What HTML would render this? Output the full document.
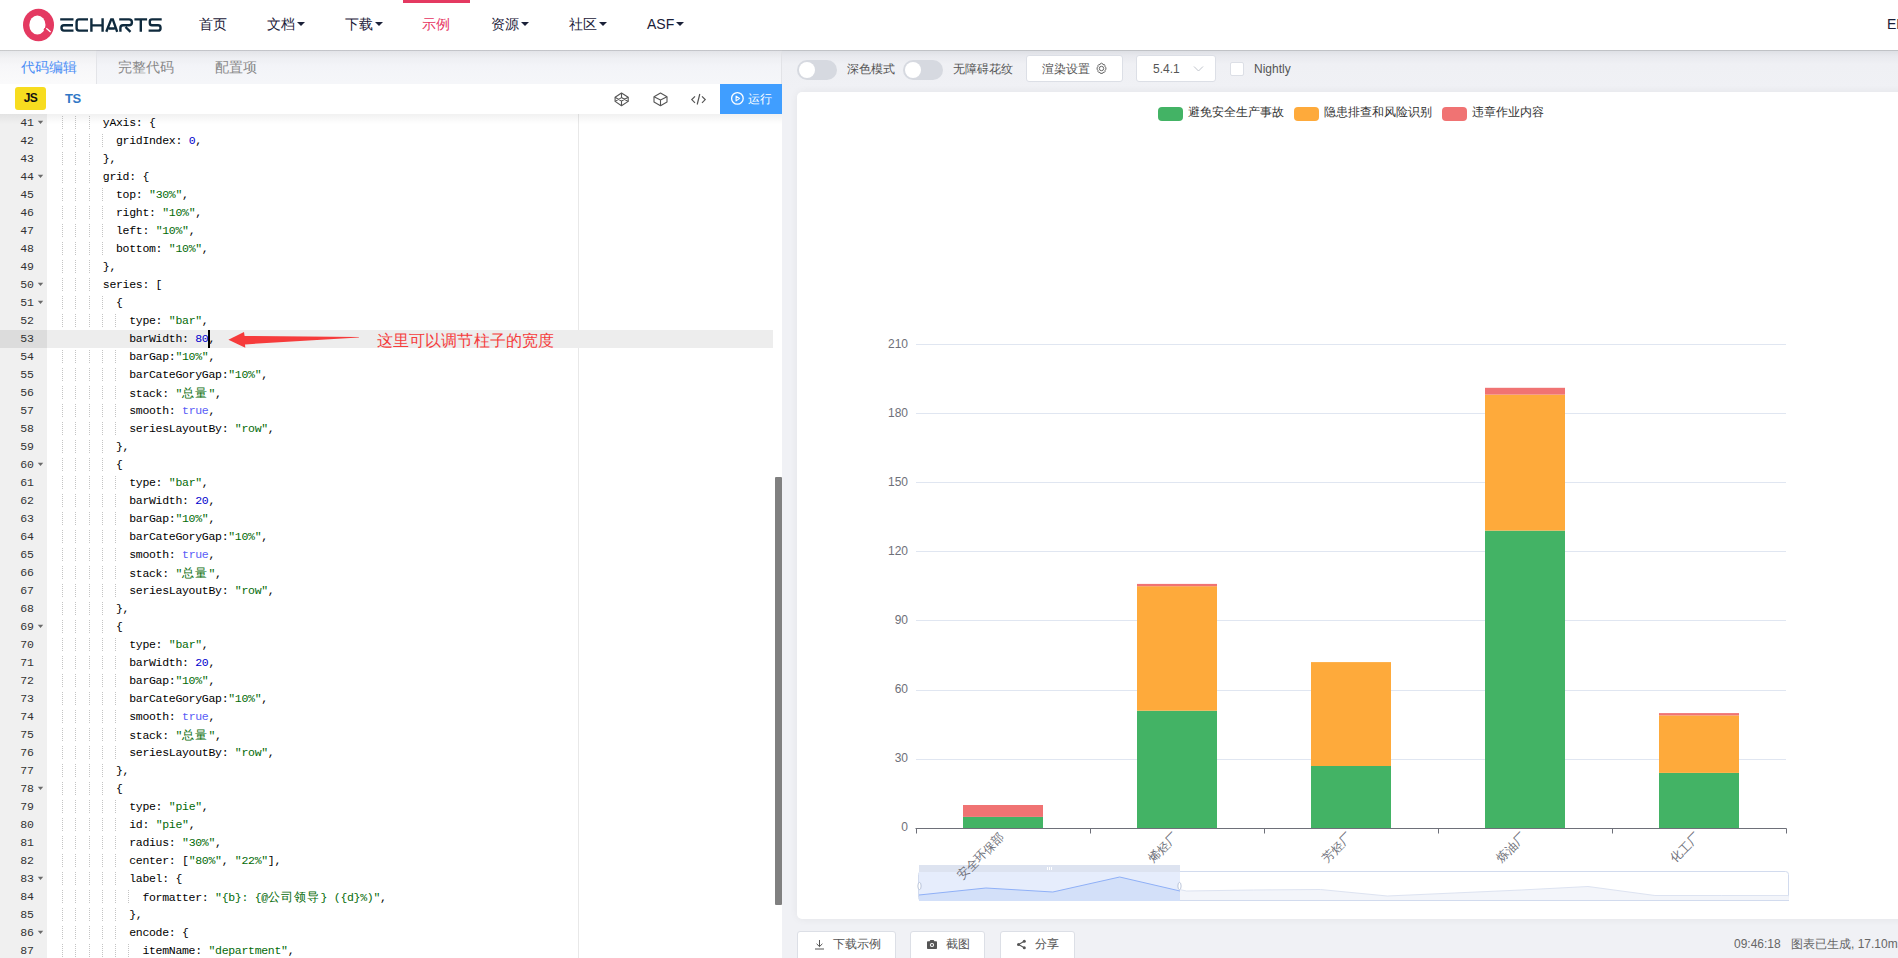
<!DOCTYPE html>
<html><head><meta charset="utf-8">
<style>
*{box-sizing:border-box;margin:0;padding:0}
html,body{width:1898px;height:958px;overflow:hidden;background:#fff;font-family:"Liberation Sans",sans-serif}
.abs{position:absolute}
#hdr{position:absolute;left:0;top:0;width:1898px;height:50px;background:#fff;z-index:5;box-shadow:0 1px 0 rgba(0,0,0,.13)}
.nav{position:absolute;top:15px;font-size:14px;line-height:18px;color:#1a2038;white-space:nowrap}
.caret{display:inline-block;width:0;height:0;border-top:4px solid #1a2038;border-left:4px solid transparent;border-right:4px solid transparent;vertical-align:middle;margin-left:2px;margin-top:-2px}
/* left */
#left{position:absolute;left:0;top:50px;width:782px;height:908px;background:#fff;overflow:hidden}
#tabs{position:absolute;left:0;top:0;width:782px;height:34px;background:linear-gradient(#e1e2e7 0px,#eeeff3 8px,#f3f4f8 16px,#f5f6f9 33px);border-right:1px solid #e2e3e7}
.tab{position:absolute;top:8px;font-size:14px;line-height:18px;color:#888}
#jsbar{position:absolute;left:0;top:34px;width:782px;height:30px;background:#fff}
#editor{position:absolute;left:0;top:64px;width:782px;height:844px;background:#fff;overflow:hidden}
#gutter{position:absolute;left:0;top:0;width:47px;height:844px;background:#f0f0f0}
.ln{position:absolute;left:0;width:34px;text-align:right;font-family:"Liberation Mono",monospace;font-size:11.5px;color:#333;height:18px;line-height:18px}
.fold{position:absolute;left:38px;width:0;height:0;border-top:3px solid #666;border-left:2.5px solid transparent;border-right:2.5px solid transparent}
.cl{position:absolute;left:50px;height:18px;line-height:18px;font-family:"Liberation Mono",monospace;font-size:11.5px;letter-spacing:-0.3px;white-space:pre;color:#000}
.s{color:#036a07}.n{color:#0000cd}.b{color:#585cf6}
.cj{display:inline-block;width:13.2px;letter-spacing:0;font-family:"Liberation Sans",sans-serif;font-size:12px}
.ig{position:absolute;width:1px;height:13px;margin-top:2px;background:repeating-linear-gradient(to bottom,#c4c4c4 0,#c4c4c4 1px,transparent 1px,transparent 2px)}
/* right */
#right{position:absolute;left:782px;top:50px;width:1116px;height:908px;background:linear-gradient(#dcdee3 0px,#e8e9ee 6px,#eff0f4 14px,#f0f1f5 40px)}
.ctl{position:absolute;font-size:12px;color:#555;line-height:16px;white-space:nowrap}
.tog{position:absolute;width:40px;height:20px;border-radius:10px;background:#d6d9e0}
.tog i{position:absolute;left:2px;top:2px;width:16px;height:16px;border-radius:8px;background:#fff}
.btn{position:absolute;background:#fff;border:1px solid #dcdfe6;border-radius:3px}
#card{position:absolute;left:15px;top:42px;width:1120px;height:827px;background:#fff;border-radius:5px;box-shadow:0 0 8px rgba(0,0,0,.06)}
.xl{position:absolute;z-index:3;height:16px;line-height:16px;font-size:12px;color:#6e7079;white-space:nowrap;transform-origin:100% 50%;transform:rotate(-45deg)}
.lg{z-index:3;font-size:12px;line-height:16px;color:#333;white-space:nowrap}
</style></head><body>

<div id="hdr">
  <svg class="abs" style="left:0;top:0" width="200" height="50" viewBox="0 0 200 50">
    <ellipse cx="38.5" cy="25" rx="15.5" ry="16.2" fill="#e43961"/>
    <ellipse cx="37.4" cy="25" rx="8.1" ry="9.4" fill="#fff"/><circle cx="45.3" cy="29.3" r="1.5" fill="#e43961"/><path d="M46.3,28.2L50.6,32" stroke="#fff" stroke-width="1.3"/>
    <g fill="none" stroke="#0f2a3d" stroke-width="2.4">
      <path d="M60.2,19.4H73.5M73,25.3H64Q61.5,25.3 61.5,27.8V28.1Q61.5,30.6 64,30.6H73.5"/>
      <path d="M88,19.4H79Q76.6,19.4 76.6,22V28Q76.6,30.6 79,30.6H88"/>
      <path d="M91.4,18.2V31.8M102.6,18.2V31.8M91.4,25.4H102.6"/>
      <path d="M106.3,31.8L111.2,19.4H112.8L117.2,31.8M108.8,28.5H114.8"/>
      <path d="M119.2,19.4H129Q131.9,19.4 131.9,22.3V22.4Q131.9,25.3 129,25.3H123Q120.4,25.3 120.4,28V31.8M125.5,27L130.5,31.8"/>
      <path d="M134.4,19.4H147.1M140.8,19.4V31.8"/>
      <path d="M161.7,19.4H152Q149.8,19.4 149.8,21.5V23Q149.8,25.3 152,25.3H158Q160.5,25.3 160.5,27.5V28.4Q160.5,30.6 158,30.6H148.6"/>
    </g>
  </svg>
  <div class="nav" style="left:199px">首页</div>
  <div class="nav" style="left:267px">文档<span class="caret"></span></div>
  <div class="nav" style="left:345px">下载<span class="caret"></span></div>
  <div class="abs" style="left:403px;top:0;width:67px;height:3px;background:#e43961"></div>
  <div class="nav" style="left:422px;color:#e6335f">示例</div>
  <div class="nav" style="left:491px">资源<span class="caret"></span></div>
  <div class="nav" style="left:569px">社区<span class="caret"></span></div>
  <div class="nav" style="left:647px">ASF<span class="caret"></span></div>
  <div class="nav" style="left:1887px">EN</div>
</div>

<div id="left">
  <div id="tabs">
    <div class="abs" style="left:0;top:0;width:97px;height:34px;background:linear-gradient(#e6e7ea 0px,#f2f2f4 8px,#f7f7f9 16px,#fafafb 33px);border-right:1px solid #e3e4e8"></div>
    <div class="tab" style="left:21px;color:#4c8ef5">代码编辑</div>
    <div class="tab" style="left:118px">完整代码</div>
    <div class="tab" style="left:215px">配置项</div>
  </div>
  <div id="jsbar">
    <div class="abs" style="left:15px;top:3px;width:31px;height:23px;background:#f7dc1f;border-radius:3px;font-size:12px;font-weight:bold;line-height:23px;text-align:center;color:#111;letter-spacing:-0.6px">JS</div>
    <div class="abs" style="left:65px;top:3px;font-size:13px;font-weight:bold;line-height:23px;color:#3178c6;letter-spacing:-0.4px">TS</div>
    <svg class="abs" style="left:614px;top:8px" width="16" height="15" viewBox="0 0 16 15" fill="none" stroke="#555" stroke-width="1.1" stroke-linejoin="round"><path d="M7.5,1L14.2,5.3V9.4L7.5,13.7L1.1,9.4V5.3Z"/><path d="M1.1,5.3L7.5,9.1L14.2,5.3M1.1,9.4L7.5,5.6L14.2,9.4M7.5,1V5.6M7.5,9.1V13.7"/></svg>
<svg class="abs" style="left:653px;top:8px" width="16" height="15" viewBox="0 0 16 15" fill="none" stroke="#555" stroke-width="1.1" stroke-linejoin="round"><path d="M7.5,1L14,4.7V10L7.5,13.7L1,10V4.7Z"/><path d="M1,4.7L7.5,8L14,4.7M7.5,8V13.7"/></svg>
<svg class="abs" style="left:690px;top:8px" width="17" height="15" viewBox="0 0 17 15" fill="none" stroke="#555" stroke-width="1.2"><path d="M5,4.4L1.8,7.6L5,10.8M12,4.4L15.2,7.6L12,10.8M9.8,2L7.2,12.5"/></svg>
<div class="abs" style="left:720px;top:0px;width:62px;height:30px;background:#409eff;color:#fff;font-size:12px;line-height:30px"><svg class="abs" style="left:10px;top:7px" width="15" height="15" viewBox="0 0 15 15"><circle cx="7.4" cy="7.4" r="5.8" fill="none" stroke="#fff" stroke-width="1.3"/><path d="M6.1,5.1L9.6,7.4L6.1,9.9Z" fill="none" stroke="#fff" stroke-width="1.1" stroke-linejoin="round"/></svg><span class="abs" style="left:28px;top:0">运行</span></div>
  </div>
  <div id="editor">
    <div id="gutter"></div>
    <div class="abs" style="left:578px;top:0;width:1px;height:844px;background:#e8e8e8"></div>
<div class="ln" style="top:0px">41</div>
<svg class="abs" style="left:37px;top:6px" width="7" height="5" viewBox="0 0 7 5"><path d="M0.8,0.8H6.2L3.5,4Z" fill="#6a6a6a"/></svg>
<div class="ln" style="top:18px">42</div>
<div class="ln" style="top:36px">43</div>
<div class="ln" style="top:54px">44</div>
<svg class="abs" style="left:37px;top:60px" width="7" height="5" viewBox="0 0 7 5"><path d="M0.8,0.8H6.2L3.5,4Z" fill="#6a6a6a"/></svg>
<div class="ln" style="top:72px">45</div>
<div class="ln" style="top:90px">46</div>
<div class="ln" style="top:108px">47</div>
<div class="ln" style="top:126px">48</div>
<div class="ln" style="top:144px">49</div>
<div class="ln" style="top:162px">50</div>
<svg class="abs" style="left:37px;top:168px" width="7" height="5" viewBox="0 0 7 5"><path d="M0.8,0.8H6.2L3.5,4Z" fill="#6a6a6a"/></svg>
<div class="ln" style="top:180px">51</div>
<svg class="abs" style="left:37px;top:186px" width="7" height="5" viewBox="0 0 7 5"><path d="M0.8,0.8H6.2L3.5,4Z" fill="#6a6a6a"/></svg>
<div class="ln" style="top:198px">52</div>
<div class="abs" style="left:0;top:216px;width:47px;height:18px;background:#dcdcdc"></div>
<div class="ln" style="top:216px">53</div>
<div class="ln" style="top:234px">54</div>
<div class="ln" style="top:252px">55</div>
<div class="ln" style="top:270px">56</div>
<div class="ln" style="top:288px">57</div>
<div class="ln" style="top:306px">58</div>
<div class="ln" style="top:324px">59</div>
<div class="ln" style="top:342px">60</div>
<svg class="abs" style="left:37px;top:348px" width="7" height="5" viewBox="0 0 7 5"><path d="M0.8,0.8H6.2L3.5,4Z" fill="#6a6a6a"/></svg>
<div class="ln" style="top:360px">61</div>
<div class="ln" style="top:378px">62</div>
<div class="ln" style="top:396px">63</div>
<div class="ln" style="top:414px">64</div>
<div class="ln" style="top:432px">65</div>
<div class="ln" style="top:450px">66</div>
<div class="ln" style="top:468px">67</div>
<div class="ln" style="top:486px">68</div>
<div class="ln" style="top:504px">69</div>
<svg class="abs" style="left:37px;top:510px" width="7" height="5" viewBox="0 0 7 5"><path d="M0.8,0.8H6.2L3.5,4Z" fill="#6a6a6a"/></svg>
<div class="ln" style="top:522px">70</div>
<div class="ln" style="top:540px">71</div>
<div class="ln" style="top:558px">72</div>
<div class="ln" style="top:576px">73</div>
<div class="ln" style="top:594px">74</div>
<div class="ln" style="top:612px">75</div>
<div class="ln" style="top:630px">76</div>
<div class="ln" style="top:648px">77</div>
<div class="ln" style="top:666px">78</div>
<svg class="abs" style="left:37px;top:672px" width="7" height="5" viewBox="0 0 7 5"><path d="M0.8,0.8H6.2L3.5,4Z" fill="#6a6a6a"/></svg>
<div class="ln" style="top:684px">79</div>
<div class="ln" style="top:702px">80</div>
<div class="ln" style="top:720px">81</div>
<div class="ln" style="top:738px">82</div>
<div class="ln" style="top:756px">83</div>
<svg class="abs" style="left:37px;top:762px" width="7" height="5" viewBox="0 0 7 5"><path d="M0.8,0.8H6.2L3.5,4Z" fill="#6a6a6a"/></svg>
<div class="ln" style="top:774px">84</div>
<div class="ln" style="top:792px">85</div>
<div class="ln" style="top:810px">86</div>
<svg class="abs" style="left:37px;top:816px" width="7" height="5" viewBox="0 0 7 5"><path d="M0.8,0.8H6.2L3.5,4Z" fill="#6a6a6a"/></svg>
<div class="ln" style="top:828px">87</div>
<div class="ig" style="left:62px;top:0px"></div>
<div class="ig" style="left:75px;top:0px"></div>
<div class="ig" style="left:89px;top:0px"></div>
<div class="ig" style="left:62px;top:18px"></div>
<div class="ig" style="left:75px;top:18px"></div>
<div class="ig" style="left:89px;top:18px"></div>
<div class="ig" style="left:102px;top:18px"></div>
<div class="ig" style="left:62px;top:36px"></div>
<div class="ig" style="left:75px;top:36px"></div>
<div class="ig" style="left:89px;top:36px"></div>
<div class="ig" style="left:62px;top:54px"></div>
<div class="ig" style="left:75px;top:54px"></div>
<div class="ig" style="left:89px;top:54px"></div>
<div class="ig" style="left:62px;top:72px"></div>
<div class="ig" style="left:75px;top:72px"></div>
<div class="ig" style="left:89px;top:72px"></div>
<div class="ig" style="left:102px;top:72px"></div>
<div class="ig" style="left:62px;top:90px"></div>
<div class="ig" style="left:75px;top:90px"></div>
<div class="ig" style="left:89px;top:90px"></div>
<div class="ig" style="left:102px;top:90px"></div>
<div class="ig" style="left:62px;top:108px"></div>
<div class="ig" style="left:75px;top:108px"></div>
<div class="ig" style="left:89px;top:108px"></div>
<div class="ig" style="left:102px;top:108px"></div>
<div class="ig" style="left:62px;top:126px"></div>
<div class="ig" style="left:75px;top:126px"></div>
<div class="ig" style="left:89px;top:126px"></div>
<div class="ig" style="left:102px;top:126px"></div>
<div class="ig" style="left:62px;top:144px"></div>
<div class="ig" style="left:75px;top:144px"></div>
<div class="ig" style="left:89px;top:144px"></div>
<div class="ig" style="left:62px;top:162px"></div>
<div class="ig" style="left:75px;top:162px"></div>
<div class="ig" style="left:89px;top:162px"></div>
<div class="ig" style="left:62px;top:180px"></div>
<div class="ig" style="left:75px;top:180px"></div>
<div class="ig" style="left:89px;top:180px"></div>
<div class="ig" style="left:102px;top:180px"></div>
<div class="ig" style="left:62px;top:198px"></div>
<div class="ig" style="left:75px;top:198px"></div>
<div class="ig" style="left:89px;top:198px"></div>
<div class="ig" style="left:102px;top:198px"></div>
<div class="ig" style="left:115px;top:198px"></div>
<div class="ig" style="left:62px;top:234px"></div>
<div class="ig" style="left:75px;top:234px"></div>
<div class="ig" style="left:89px;top:234px"></div>
<div class="ig" style="left:102px;top:234px"></div>
<div class="ig" style="left:115px;top:234px"></div>
<div class="ig" style="left:62px;top:252px"></div>
<div class="ig" style="left:75px;top:252px"></div>
<div class="ig" style="left:89px;top:252px"></div>
<div class="ig" style="left:102px;top:252px"></div>
<div class="ig" style="left:115px;top:252px"></div>
<div class="ig" style="left:62px;top:270px"></div>
<div class="ig" style="left:75px;top:270px"></div>
<div class="ig" style="left:89px;top:270px"></div>
<div class="ig" style="left:102px;top:270px"></div>
<div class="ig" style="left:115px;top:270px"></div>
<div class="ig" style="left:62px;top:288px"></div>
<div class="ig" style="left:75px;top:288px"></div>
<div class="ig" style="left:89px;top:288px"></div>
<div class="ig" style="left:102px;top:288px"></div>
<div class="ig" style="left:115px;top:288px"></div>
<div class="ig" style="left:62px;top:306px"></div>
<div class="ig" style="left:75px;top:306px"></div>
<div class="ig" style="left:89px;top:306px"></div>
<div class="ig" style="left:102px;top:306px"></div>
<div class="ig" style="left:115px;top:306px"></div>
<div class="ig" style="left:62px;top:324px"></div>
<div class="ig" style="left:75px;top:324px"></div>
<div class="ig" style="left:89px;top:324px"></div>
<div class="ig" style="left:102px;top:324px"></div>
<div class="ig" style="left:62px;top:342px"></div>
<div class="ig" style="left:75px;top:342px"></div>
<div class="ig" style="left:89px;top:342px"></div>
<div class="ig" style="left:102px;top:342px"></div>
<div class="ig" style="left:62px;top:360px"></div>
<div class="ig" style="left:75px;top:360px"></div>
<div class="ig" style="left:89px;top:360px"></div>
<div class="ig" style="left:102px;top:360px"></div>
<div class="ig" style="left:115px;top:360px"></div>
<div class="ig" style="left:62px;top:378px"></div>
<div class="ig" style="left:75px;top:378px"></div>
<div class="ig" style="left:89px;top:378px"></div>
<div class="ig" style="left:102px;top:378px"></div>
<div class="ig" style="left:115px;top:378px"></div>
<div class="ig" style="left:62px;top:396px"></div>
<div class="ig" style="left:75px;top:396px"></div>
<div class="ig" style="left:89px;top:396px"></div>
<div class="ig" style="left:102px;top:396px"></div>
<div class="ig" style="left:115px;top:396px"></div>
<div class="ig" style="left:62px;top:414px"></div>
<div class="ig" style="left:75px;top:414px"></div>
<div class="ig" style="left:89px;top:414px"></div>
<div class="ig" style="left:102px;top:414px"></div>
<div class="ig" style="left:115px;top:414px"></div>
<div class="ig" style="left:62px;top:432px"></div>
<div class="ig" style="left:75px;top:432px"></div>
<div class="ig" style="left:89px;top:432px"></div>
<div class="ig" style="left:102px;top:432px"></div>
<div class="ig" style="left:115px;top:432px"></div>
<div class="ig" style="left:62px;top:450px"></div>
<div class="ig" style="left:75px;top:450px"></div>
<div class="ig" style="left:89px;top:450px"></div>
<div class="ig" style="left:102px;top:450px"></div>
<div class="ig" style="left:115px;top:450px"></div>
<div class="ig" style="left:62px;top:468px"></div>
<div class="ig" style="left:75px;top:468px"></div>
<div class="ig" style="left:89px;top:468px"></div>
<div class="ig" style="left:102px;top:468px"></div>
<div class="ig" style="left:115px;top:468px"></div>
<div class="ig" style="left:62px;top:486px"></div>
<div class="ig" style="left:75px;top:486px"></div>
<div class="ig" style="left:89px;top:486px"></div>
<div class="ig" style="left:102px;top:486px"></div>
<div class="ig" style="left:62px;top:504px"></div>
<div class="ig" style="left:75px;top:504px"></div>
<div class="ig" style="left:89px;top:504px"></div>
<div class="ig" style="left:102px;top:504px"></div>
<div class="ig" style="left:62px;top:522px"></div>
<div class="ig" style="left:75px;top:522px"></div>
<div class="ig" style="left:89px;top:522px"></div>
<div class="ig" style="left:102px;top:522px"></div>
<div class="ig" style="left:115px;top:522px"></div>
<div class="ig" style="left:62px;top:540px"></div>
<div class="ig" style="left:75px;top:540px"></div>
<div class="ig" style="left:89px;top:540px"></div>
<div class="ig" style="left:102px;top:540px"></div>
<div class="ig" style="left:115px;top:540px"></div>
<div class="ig" style="left:62px;top:558px"></div>
<div class="ig" style="left:75px;top:558px"></div>
<div class="ig" style="left:89px;top:558px"></div>
<div class="ig" style="left:102px;top:558px"></div>
<div class="ig" style="left:115px;top:558px"></div>
<div class="ig" style="left:62px;top:576px"></div>
<div class="ig" style="left:75px;top:576px"></div>
<div class="ig" style="left:89px;top:576px"></div>
<div class="ig" style="left:102px;top:576px"></div>
<div class="ig" style="left:115px;top:576px"></div>
<div class="ig" style="left:62px;top:594px"></div>
<div class="ig" style="left:75px;top:594px"></div>
<div class="ig" style="left:89px;top:594px"></div>
<div class="ig" style="left:102px;top:594px"></div>
<div class="ig" style="left:115px;top:594px"></div>
<div class="ig" style="left:62px;top:612px"></div>
<div class="ig" style="left:75px;top:612px"></div>
<div class="ig" style="left:89px;top:612px"></div>
<div class="ig" style="left:102px;top:612px"></div>
<div class="ig" style="left:115px;top:612px"></div>
<div class="ig" style="left:62px;top:630px"></div>
<div class="ig" style="left:75px;top:630px"></div>
<div class="ig" style="left:89px;top:630px"></div>
<div class="ig" style="left:102px;top:630px"></div>
<div class="ig" style="left:115px;top:630px"></div>
<div class="ig" style="left:62px;top:648px"></div>
<div class="ig" style="left:75px;top:648px"></div>
<div class="ig" style="left:89px;top:648px"></div>
<div class="ig" style="left:102px;top:648px"></div>
<div class="ig" style="left:62px;top:666px"></div>
<div class="ig" style="left:75px;top:666px"></div>
<div class="ig" style="left:89px;top:666px"></div>
<div class="ig" style="left:102px;top:666px"></div>
<div class="ig" style="left:62px;top:684px"></div>
<div class="ig" style="left:75px;top:684px"></div>
<div class="ig" style="left:89px;top:684px"></div>
<div class="ig" style="left:102px;top:684px"></div>
<div class="ig" style="left:115px;top:684px"></div>
<div class="ig" style="left:62px;top:702px"></div>
<div class="ig" style="left:75px;top:702px"></div>
<div class="ig" style="left:89px;top:702px"></div>
<div class="ig" style="left:102px;top:702px"></div>
<div class="ig" style="left:115px;top:702px"></div>
<div class="ig" style="left:62px;top:720px"></div>
<div class="ig" style="left:75px;top:720px"></div>
<div class="ig" style="left:89px;top:720px"></div>
<div class="ig" style="left:102px;top:720px"></div>
<div class="ig" style="left:115px;top:720px"></div>
<div class="ig" style="left:62px;top:738px"></div>
<div class="ig" style="left:75px;top:738px"></div>
<div class="ig" style="left:89px;top:738px"></div>
<div class="ig" style="left:102px;top:738px"></div>
<div class="ig" style="left:115px;top:738px"></div>
<div class="ig" style="left:62px;top:756px"></div>
<div class="ig" style="left:75px;top:756px"></div>
<div class="ig" style="left:89px;top:756px"></div>
<div class="ig" style="left:102px;top:756px"></div>
<div class="ig" style="left:115px;top:756px"></div>
<div class="ig" style="left:62px;top:774px"></div>
<div class="ig" style="left:75px;top:774px"></div>
<div class="ig" style="left:89px;top:774px"></div>
<div class="ig" style="left:102px;top:774px"></div>
<div class="ig" style="left:115px;top:774px"></div>
<div class="ig" style="left:128px;top:774px"></div>
<div class="ig" style="left:62px;top:792px"></div>
<div class="ig" style="left:75px;top:792px"></div>
<div class="ig" style="left:89px;top:792px"></div>
<div class="ig" style="left:102px;top:792px"></div>
<div class="ig" style="left:115px;top:792px"></div>
<div class="ig" style="left:62px;top:810px"></div>
<div class="ig" style="left:75px;top:810px"></div>
<div class="ig" style="left:89px;top:810px"></div>
<div class="ig" style="left:102px;top:810px"></div>
<div class="ig" style="left:115px;top:810px"></div>
<div class="ig" style="left:62px;top:828px"></div>
<div class="ig" style="left:75px;top:828px"></div>
<div class="ig" style="left:89px;top:828px"></div>
<div class="ig" style="left:102px;top:828px"></div>
<div class="ig" style="left:115px;top:828px"></div>
<div class="ig" style="left:128px;top:828px"></div>
<div class="cl" style="top:0px">        yAxis: {</div>
<div class="cl" style="top:18px">          gridIndex: <span class="n">0</span>,</div>
<div class="cl" style="top:36px">        },</div>
<div class="cl" style="top:54px">        grid: {</div>
<div class="cl" style="top:72px">          top: <span class="s">"30%"</span>,</div>
<div class="cl" style="top:90px">          right: <span class="s">"10%"</span>,</div>
<div class="cl" style="top:108px">          left: <span class="s">"10%"</span>,</div>
<div class="cl" style="top:126px">          bottom: <span class="s">"10%"</span>,</div>
<div class="cl" style="top:144px">        },</div>
<div class="cl" style="top:162px">        series: [</div>
<div class="cl" style="top:180px">          {</div>
<div class="cl" style="top:198px">            type: <span class="s">"bar"</span>,</div>
<div class="abs" style="left:47px;top:216px;width:726px;height:18px;background:#ededed"></div>
<div class="cl" style="top:216px">            barWidth: <span class="n">80</span>,</div>
<div class="cl" style="top:234px">            barGap:<span class="s">"10%"</span>,</div>
<div class="cl" style="top:252px">            barCateGoryGap:<span class="s">"10%"</span>,</div>
<div class="cl" style="top:270px">            stack: <span class="s">"<span class="cj">总</span><span class="cj">量</span>"</span>,</div>
<div class="cl" style="top:288px">            smooth: <span class="b">true</span>,</div>
<div class="cl" style="top:306px">            seriesLayoutBy: <span class="s">"row"</span>,</div>
<div class="cl" style="top:324px">          },</div>
<div class="cl" style="top:342px">          {</div>
<div class="cl" style="top:360px">            type: <span class="s">"bar"</span>,</div>
<div class="cl" style="top:378px">            barWidth: <span class="n">20</span>,</div>
<div class="cl" style="top:396px">            barGap:<span class="s">"10%"</span>,</div>
<div class="cl" style="top:414px">            barCateGoryGap:<span class="s">"10%"</span>,</div>
<div class="cl" style="top:432px">            smooth: <span class="b">true</span>,</div>
<div class="cl" style="top:450px">            stack: <span class="s">"<span class="cj">总</span><span class="cj">量</span>"</span>,</div>
<div class="cl" style="top:468px">            seriesLayoutBy: <span class="s">"row"</span>,</div>
<div class="cl" style="top:486px">          },</div>
<div class="cl" style="top:504px">          {</div>
<div class="cl" style="top:522px">            type: <span class="s">"bar"</span>,</div>
<div class="cl" style="top:540px">            barWidth: <span class="n">20</span>,</div>
<div class="cl" style="top:558px">            barGap:<span class="s">"10%"</span>,</div>
<div class="cl" style="top:576px">            barCateGoryGap:<span class="s">"10%"</span>,</div>
<div class="cl" style="top:594px">            smooth: <span class="b">true</span>,</div>
<div class="cl" style="top:612px">            stack: <span class="s">"<span class="cj">总</span><span class="cj">量</span>"</span>,</div>
<div class="cl" style="top:630px">            seriesLayoutBy: <span class="s">"row"</span>,</div>
<div class="cl" style="top:648px">          },</div>
<div class="cl" style="top:666px">          {</div>
<div class="cl" style="top:684px">            type: <span class="s">"pie"</span>,</div>
<div class="cl" style="top:702px">            id: <span class="s">"pie"</span>,</div>
<div class="cl" style="top:720px">            radius: <span class="s">"30%"</span>,</div>
<div class="cl" style="top:738px">            center: [<span class="s">"80%"</span>, <span class="s">"22%"</span>],</div>
<div class="cl" style="top:756px">            label: {</div>
<div class="cl" style="top:774px">              formatter: <span class="s">"{b}: {@<span class="cj">公</span><span class="cj">司</span><span class="cj">领</span><span class="cj">导</span>} ({d}%)"</span>,</div>
<div class="cl" style="top:792px">            },</div>
<div class="cl" style="top:810px">            encode: {</div>
<div class="cl" style="top:828px">              itemName: <span class="s">"department"</span>,</div>
<div class="abs" style="left:208px;top:216px;width:2px;height:18px;background:#000"></div>
<div class="abs" style="left:0;top:0;width:782px;height:10px;background:linear-gradient(rgba(0,0,0,.055),rgba(0,0,0,0));z-index:2"></div>
<div class="abs" style="left:775px;top:363px;width:7px;height:428px;background:#808080;border-radius:1px"></div>
<svg class="abs" style="left:220px;top:206px" width="150" height="40" viewBox="220 320 150 40"><path d="M228.4,339.7 L244,332 L244.6,336 L358.9,337 L358.9,337.6 L245,344.4 L245.3,347.8 Z" fill="#f63b3b"/></svg>
<div class="abs" style="left:377px;top:217px;font-size:16px;line-height:20px;color:#f53c3c;letter-spacing:0.1px;white-space:nowrap;z-index:2">这里可以调节柱子的宽度</div>
  </div>
</div>

<div id="right">
  <div class="tog" style="left:15px;top:10px"><i></i></div>
  <div class="ctl" style="left:65px;top:11px">深色模式</div>
  <div class="tog" style="left:121px;top:10px"><i></i></div>
  <div class="ctl" style="left:171px;top:11px">无障碍花纹</div>
  <div class="btn" style="left:244px;top:5px;width:97px;height:27px"></div>
  <div class="ctl" style="left:260px;top:11px">渲染设置</div>
  <div class="btn" style="left:354px;top:5px;width:80px;height:27px"></div>
  <div class="ctl" style="left:371px;top:11px">5.4.1</div><svg class="abs" style="left:313px;top:12px" width="13" height="13" viewBox="0 0 13 13"><path d="M6.5,1.2L7.6,1.6L8,2.7L9.2,2.5L10,3.3L9.8,4.5L10.9,5.4V7.6L9.8,8.5L10,9.7L9.2,10.5L8,10.3L7.6,11.4H5.4L5,10.3L3.8,10.5L3,9.7L3.2,8.5L2.1,7.6V5.4L3.2,4.5L3,3.3L3.8,2.5L5,2.7L5.4,1.6Z" fill="none" stroke="#666" stroke-width="1" stroke-linejoin="round"/><circle cx="6.5" cy="6.5" r="2.2" fill="none" stroke="#666" stroke-width="1"/></svg><svg class="abs" style="left:411px;top:15px" width="11" height="8" viewBox="0 0 11 8"><path d="M1,1.5L5.5,6L10,1.5" fill="none" stroke="#c0c4cc" stroke-width="1"/></svg>
  <div class="btn" style="left:448px;top:12px;width:14px;height:14px;border-radius:2px"></div>
  <div class="ctl" style="left:472px;top:11px">Nightly</div>
  <div id="card"></div>
  <div class="btn" style="left:15px;top:881px;width:99px;height:40px"></div>
  <svg class="abs" style="left:32px;top:889px" width="11" height="11" viewBox="0 0 11 11" fill="none" stroke="#555" stroke-width="1"><path d="M5.5,1V7.5M2.6,4.8L5.5,7.6L8.4,4.8M1,10H10"/></svg><div class="ctl" style="left:51px;top:886px">下载示例</div>
  <div class="btn" style="left:128px;top:881px;width:75px;height:40px"></div>
  <svg class="abs" style="left:144px;top:889px" width="12" height="11" viewBox="0 0 12 11"><path d="M1,3Q1,2.2 1.8,2.2H3.6L4.4,1H7.6L8.4,2.2H10.2Q11,2.2 11,3V9.2Q11,10 10.2,10H1.8Q1,10 1,9.2Z" fill="#555"/><circle cx="6" cy="6" r="2.1" fill="#fff"/><circle cx="6" cy="6" r="1.1" fill="#555"/></svg><div class="ctl" style="left:164px;top:886px">截图</div>
  <div class="btn" style="left:218px;top:881px;width:75px;height:40px"></div>
  <svg class="abs" style="left:234px;top:889px" width="11" height="11" viewBox="0 0 11 11"><path d="M8.3,2.2L2.5,5.5L8.3,8.8" fill="none" stroke="#555" stroke-width="1.1"/><circle cx="8.3" cy="2.2" r="1.5" fill="#555"/><circle cx="2.5" cy="5.5" r="1.5" fill="#555"/><circle cx="8.3" cy="8.8" r="1.5" fill="#555"/></svg><div class="ctl" style="left:253px;top:886px">分享</div>
  <div class="ctl" style="left:952px;top:886px;color:#666">09:46:18</div>
  <div class="ctl" style="left:1009px;top:886px;color:#666">图表已生成, 17.10ms</div>
</div>
<svg class="abs" style="left:0;top:0;z-index:3" width="1898" height="958" viewBox="0 0 1898 958">
<line x1="916" x2="1786" y1="759.5" y2="759.5" stroke="#e0e6f1" stroke-width="1"/>
<line x1="916" x2="1786" y1="690.5" y2="690.5" stroke="#e0e6f1" stroke-width="1"/>
<line x1="916" x2="1786" y1="620.5" y2="620.5" stroke="#e0e6f1" stroke-width="1"/>
<line x1="916" x2="1786" y1="551.5" y2="551.5" stroke="#e0e6f1" stroke-width="1"/>
<line x1="916" x2="1786" y1="482.5" y2="482.5" stroke="#e0e6f1" stroke-width="1"/>
<line x1="916" x2="1786" y1="413.5" y2="413.5" stroke="#e0e6f1" stroke-width="1"/>
<line x1="916" x2="1786" y1="344.5" y2="344.5" stroke="#e0e6f1" stroke-width="1"/>
<rect x="963" y="816.9" width="80" height="11.1" fill="#43b365"/>
<rect x="963" y="805.0" width="80" height="11.9" fill="#f07373"/>
<rect x="1137" y="710.7" width="80" height="117.3" fill="#43b365"/>
<rect x="1137" y="586.2" width="80" height="124.5" fill="#feaa3b"/>
<rect x="1137" y="583.9" width="80" height="2.3" fill="#f07373"/>
<rect x="1311" y="766.0" width="80" height="62.0" fill="#43b365"/>
<rect x="1311" y="662.1" width="80" height="103.9" fill="#feaa3b"/>
<rect x="1485" y="530.6" width="80" height="297.4" fill="#43b365"/>
<rect x="1485" y="394.6" width="80" height="136.0" fill="#feaa3b"/>
<rect x="1485" y="387.8" width="80" height="6.8" fill="#f07373"/>
<rect x="1659" y="772.9" width="80" height="55.1" fill="#43b365"/>
<rect x="1659" y="715.4" width="80" height="57.5" fill="#feaa3b"/>
<rect x="1659" y="713.1" width="80" height="2.3" fill="#f07373"/>
<line x1="915.5" x2="1786.5" y1="828.5" y2="828.5" stroke="#6e7079" stroke-width="1"/>
<line x1="916.5" x2="916.5" y1="828.5" y2="833.5" stroke="#6e7079" stroke-width="1"/>
<line x1="1090.5" x2="1090.5" y1="828.5" y2="833.5" stroke="#6e7079" stroke-width="1"/>
<line x1="1264.5" x2="1264.5" y1="828.5" y2="833.5" stroke="#6e7079" stroke-width="1"/>
<line x1="1438.5" x2="1438.5" y1="828.5" y2="833.5" stroke="#6e7079" stroke-width="1"/>
<line x1="1612.5" x2="1612.5" y1="828.5" y2="833.5" stroke="#6e7079" stroke-width="1"/>
<line x1="1786.5" x2="1786.5" y1="828.5" y2="833.5" stroke="#6e7079" stroke-width="1"/>
<text x="908" y="831.2" text-anchor="end" font-size="12" fill="#6e7079" font-family="Liberation Sans, sans-serif">0</text>
<text x="908" y="762.1" text-anchor="end" font-size="12" fill="#6e7079" font-family="Liberation Sans, sans-serif">30</text>
<text x="908" y="693.0" text-anchor="end" font-size="12" fill="#6e7079" font-family="Liberation Sans, sans-serif">60</text>
<text x="908" y="623.9" text-anchor="end" font-size="12" fill="#6e7079" font-family="Liberation Sans, sans-serif">90</text>
<text x="908" y="554.8" text-anchor="end" font-size="12" fill="#6e7079" font-family="Liberation Sans, sans-serif">120</text>
<text x="908" y="485.7" text-anchor="end" font-size="12" fill="#6e7079" font-family="Liberation Sans, sans-serif">150</text>
<text x="908" y="416.6" text-anchor="end" font-size="12" fill="#6e7079" font-family="Liberation Sans, sans-serif">180</text>
<text x="908" y="347.5" text-anchor="end" font-size="12" fill="#6e7079" font-family="Liberation Sans, sans-serif">210</text>
<rect x="918.5" y="871.5" width="870" height="29" rx="3" fill="#fff" stroke="#d2dbee" stroke-width="1"/>
<polygon points="919,900.5 919.0,895.0 985.9,888.0 1052.8,892.0 1119.7,877.0 1186.6,891.0 1253.5,890.0 1320.4,889.5 1387.3,896.0 1454.2,893.0 1521.1,890.0 1588.0,886.5 1654.9,895.5 1721.8,895.5 1788.7,895.5 1789,900.5" fill="#f3f5fa"/>
<polyline points="919.0,895.0 985.9,888.0 1052.8,892.0 1119.7,877.0 1186.6,891.0 1253.5,890.0 1320.4,889.5 1387.3,896.0 1454.2,893.0 1521.1,890.0 1588.0,886.5 1654.9,895.5 1721.8,895.5 1788.7,895.5" fill="none" stroke="#dde3f1" stroke-width="1"/>
<rect x="1180" y="900" width="609" height="1" fill="#d2dbee"/>
<rect x="919" y="872" width="261" height="29" fill="#e6edfc"/>
<polygon points="919,901 919.0,895.0 985.9,888.0 1052.8,892.0 1119.7,877.0 1180.0,891.0 1180,901" fill="#d3e0f9"/>
<polyline points="919.0,895.0 985.9,888.0 1052.8,892.0 1119.7,877.0 1180.0,891.0" fill="none" stroke="#8fb0f7" stroke-width="1"/>
<rect x="919" y="865" width="261" height="7" fill="#dde3f0"/>
<rect x="1047" y="867" width="1" height="3" fill="#fff"/><rect x="1049" y="867" width="1" height="3" fill="#fff"/><rect x="1051" y="867" width="1" height="3" fill="#fff"/>
<ellipse cx="919.5" cy="886" rx="1.6" ry="3.6" fill="#fff" stroke="#aab6cf" stroke-width="0.8"/>
<ellipse cx="1179.5" cy="886" rx="1.6" ry="3.6" fill="#fff" stroke="#aab6cf" stroke-width="0.8"/>
</svg>
<div class="xl" style="right:896px;top:827px">安全环保部</div>
<div class="xl" style="right:722px;top:827px">烯烃厂</div>
<div class="xl" style="right:548px;top:827px">芳烃厂</div>
<div class="xl" style="right:374px;top:827px">炼油厂</div>
<div class="xl" style="right:200px;top:827px">化工厂</div>
<div class="abs" style="left:1158px;top:107px;width:25px;height:14px;border-radius:4px;background:#43b365;z-index:3"></div>
<div class="abs lg" style="left:1188px;top:104px">避免安全生产事故</div>
<div class="abs" style="left:1294px;top:107px;width:25px;height:14px;border-radius:4px;background:#feaa3b;z-index:3"></div>
<div class="abs lg" style="left:1324px;top:104px">隐患排查和风险识别</div>
<div class="abs" style="left:1442px;top:107px;width:25px;height:14px;border-radius:4px;background:#f07373;z-index:3"></div>
<div class="abs lg" style="left:1472px;top:104px">违章作业内容</div>
</body></html>
